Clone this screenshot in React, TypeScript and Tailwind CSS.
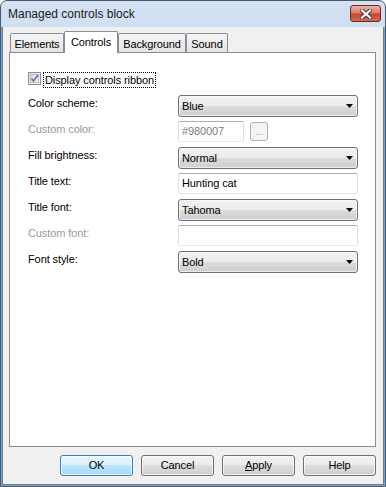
import React from "react";

const Select = ({ value }: { value: string }) => (
  <div className="relative flex h-[22px] w-[180px] items-center rounded-[3px] border border-[#707070] bg-[linear-gradient(to_bottom,#f2f2f2_0%,#ebebeb_50%,#dddddd_50%,#cfcfcf_100%)] pl-[3px] shadow-[inset_0_0_0_1px_rgba(255,255,255,0.6)]">
    <span>{value}</span>
    <svg className="absolute right-[4px] top-[8px]" width="7" height="4" viewBox="0 0 7 4">
      <path d="M0 0h7L3.5 4z" fill="#000" />
    </svg>
  </div>
);

const TextBox = ({ value, disabled, w = "w-[180px]" }: { value?: string; disabled?: boolean; w?: string }) => (
  <div
    className={`flex h-[21px] ${w} items-center rounded-[2px] border border-[#abadb3] border-x-[#dbdfe6] border-b-[#e3e9ef] bg-white pl-[3px] ${
      disabled ? "text-[#7d7d7d]" : "text-black"
    }`}
  >
    {value}
  </div>
);

const Row = ({ label, disabled, children }: { label: string; disabled?: boolean; children: React.ReactNode }) => (
  <div className="flex h-[26px] items-start">
    <div className={`w-[150px] pt-[2px] leading-[13px] ${disabled ? "text-[#9a9a9a]" : "text-black"}`}>{label}</div>
    {children}
  </div>
);

const Button = ({ children, primary }: { children: React.ReactNode; primary?: boolean }) => (
  <div
    className={`flex h-[21px] w-[73px] items-center justify-center rounded-[3px] border shadow-[inset_0_0_0_1px_rgba(255,255,255,0.7)] ${
      primary
        ? "border-[#3c7fb1] bg-[linear-gradient(to_bottom,#eaf6fd_0%,#d9f0fc_50%,#bee6fd_50%,#a7d9f5_100%)]"
        : "border-[#707070] bg-[linear-gradient(to_bottom,#f2f2f2_0%,#ebebeb_50%,#dddddd_50%,#cfcfcf_100%)]"
    }`}
  >
    {children}
  </div>
);

const tabs = [
  { name: "Elements", w: "w-[54px]" },
  { name: "Controls", w: "w-[54px]", active: true },
  { name: "Background", w: "w-[68px]" },
  { name: "Sound", w: "w-[42px]" },
];

export default function App() {
  return (
    <div className="flex h-[487px] w-[386px] flex-col rounded-t-[7px] border border-[#4b5869] bg-[linear-gradient(to_bottom,#d3e1f3_0%,#bfd3ec_40%,#c6d8ef_100%)] font-['Liberation_Sans',Arial,sans-serif] text-[11px] tracking-[-0.1px] text-black">
      {/* title bar */}
      <div className="flex h-[26px] items-start">
        <div className="pl-[7px] pt-[5px] text-[12px] leading-[16px] tracking-normal text-[#1a1a1a]">Managed controls block</div>
        <div className="ml-auto mr-[4px] mt-[4px] flex h-[17px] w-[31px] items-center justify-center rounded-[3px] border border-[#6b2a22] bg-[linear-gradient(to_bottom,#eab3a6_0%,#db7d6a_45%,#c7452f_55%,#d56a50_100%)]">
          <svg width="12" height="10" viewBox="0 0 12 10">
            <path d="M2 1.5L10 8.5M10 1.5L2 8.5" stroke="#3d3d3d" strokeWidth="4" strokeLinecap="square" />
            <path d="M2 1.5L10 8.5M10 1.5L2 8.5" stroke="#ffffff" strokeWidth="2.2" strokeLinecap="square" />
          </svg>
        </div>
      </div>

      <div className="flex flex-1 flex-col border-x border-b border-[#69a9dd]">
        <div className="flex flex-1 flex-col border-x border-b border-[#7b7b7b] bg-[#f0f0f0] pr-[7px] pl-[6px]">
          {/* tabs */}
          <div className="mt-[4px] flex h-[21px] items-end pl-[1px]">
            {tabs.map((t) =>
              t.active ? (
                <div
                  key={t.name}
                  className={`relative z-10 -mb-px flex h-[22px] ${t.w} items-start justify-center rounded-t-[2px] border border-b-0 border-[#898c95] bg-white pt-[3px] leading-[14px]`}
                >
                  {t.name}
                </div>
              ) : (
                <div
                  key={t.name}
                  className={`flex h-[19px] ${t.w} items-start justify-center rounded-t-[2px] border border-b-0 border-[#898c95] bg-[linear-gradient(to_bottom,#f6f6f6,#e4e4e4)] pt-[3px] leading-[14px]`}
                >
                  {t.name}
                </div>
              )
            )}
          </div>

          {/* panel */}
          <div className="h-[395px] border border-[#898c95] bg-white pl-[18px] pt-[19px]">
            <div className="flex h-[23px] items-start">
              <div className="h-[13px] w-[13px] border border-[#8e8f8f] bg-[linear-gradient(135deg,#dcdcdc,#fbfbfb)] p-[1px]">
                <div className="h-full w-full border border-[#b9bdc4] bg-[linear-gradient(135deg,#d8dbe0,#f4f5f7)]">
                  <svg width="9" height="9" viewBox="0 0 9 9" className="-ml-px -mt-px">
                    <path d="M1.5 4.5L3.5 7L8 1" fill="none" stroke="#5a6ea3" strokeWidth="1.5" />
                  </svg>
                </div>
              </div>
              <div className="ml-[2px] h-[16px] border border-dotted border-black px-[1px] leading-[14px]">Display controls ribbon</div>
            </div>

            <Row label="Color scheme:">
              <Select value="Blue" />
            </Row>
            <Row label="Custom color:" disabled>
              <TextBox value="#980007" disabled w="w-[66px]" />
              <div className="ml-[6px] mt-px flex h-[19px] w-[18px] items-end justify-center rounded-[3px] border border-[#adb2b5] bg-[#f4f4f4] pb-[3px] text-[9px] leading-[9px] text-[#9a9a9a]">
                ...
              </div>
            </Row>
            <Row label="Fill brightness:">
              <Select value="Normal" />
            </Row>
            <Row label="Title text:">
              <TextBox value="Hunting cat" />
            </Row>
            <Row label="Title font:">
              <Select value="Tahoma" />
            </Row>
            <Row label="Custom font:" disabled>
              <TextBox />
            </Row>
            <Row label="Font style:">
              <Select value="Bold" />
            </Row>
          </div>

          {/* buttons */}
          <div className="mt-[8px] flex justify-end gap-[8px]">
            <Button primary>OK</Button>
            <Button>Cancel</Button>
            <Button>
              <span>
                <span className="underline">A</span>pply
              </span>
            </Button>
            <Button>Help</Button>
          </div>
        </div>
      </div>
    </div>
  );
}
